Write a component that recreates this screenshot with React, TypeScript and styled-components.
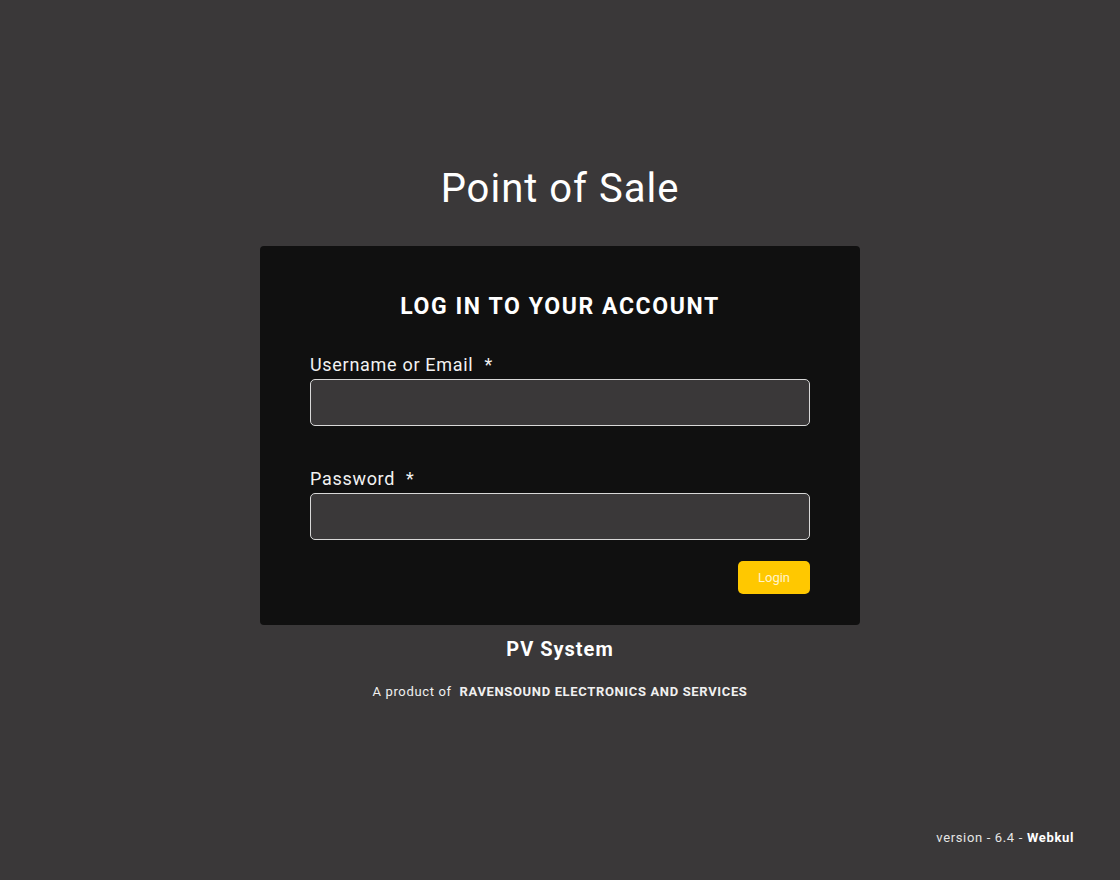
import React from "react";
import styled, { createGlobalStyle } from "styled-components";

const Global = createGlobalStyle`
  html, body { margin: 0; padding: 0; }
  body {
    background: #3a3839;
    font-family: Roboto, "Liberation Sans", sans-serif;
    color: #fff;
  }
  * { box-sizing: border-box; }
`;

const Page = styled.div`
  min-height: 880px;
  display: flex;
  flex-direction: column;
`;

const Main = styled.main`
  display: flex;
  flex-direction: column;
  align-items: center;
  padding-top: 164px;
`;

const Title = styled.h1`
  margin: 0;
  font-size: 40px;
  font-weight: 400;
  line-height: 50px;
  color: #fff;
  letter-spacing: 1px;
`;

const Card = styled.form`
  margin-top: 32px;
  width: 600px;
  background: #101010;
  border-radius: 4px;
  padding: 45px 50px 31px;
  display: flex;
  flex-direction: column;
`;

const CardTitle = styled.h2`
  margin: 0 0 31px;
  text-align: center;
  font-size: 23px;
  font-weight: 700;
  line-height: 32px;
  letter-spacing: 1.6px;
  color: #fff;
`;

const Field = styled.div<{ $gap?: number }>`
  display: flex;
  flex-direction: column;
  margin-bottom: ${(p) => p.$gap ?? 0}px;
`;

const Label = styled.label`
  font-size: 18px;
  line-height: 22px;
  letter-spacing: 0.7px;
  color: #f2f2f2;
  margin-bottom: 3px;
`;

const Star = styled.span`
  margin-left: 11px;
`;

const Input = styled.input`
  height: 47px;
  width: 100%;
  background: #3a3839;
  border: 1px solid #d8d8d8;
  border-radius: 5px;
  color: #fff;
  font-size: 16px;
  padding: 0 12px;
  outline: none;
`;

const Actions = styled.div`
  display: flex;
  justify-content: flex-end;
  margin-top: 21px;
`;

const Button = styled.button`
  width: 72px;
  height: 33px;
  border: none;
  border-radius: 5px;
  background: #ffc800;
  color: #fff4cc;
  font-family: Roboto, "Liberation Sans", sans-serif;
  font-size: 13px;
  cursor: pointer;
`;

const Brand = styled.div`
  margin-top: 12px;
  font-size: 20px;
  font-weight: 700;
  line-height: 24px;
  letter-spacing: 1px;
`;

const Product = styled.div`
  margin-top: 23px;
  font-size: 13px;
  line-height: 16px;
  letter-spacing: 0.65px;
  color: #f0f0f0;
  b {
    font-weight: 700;
    margin-left: 4px;
  }
`;

const Footer = styled.footer`
  margin-top: auto;
  display: flex;
  justify-content: flex-end;
  padding: 0 46px 34px;
  font-size: 13px;
  line-height: 16px;
  letter-spacing: 0.65px;
  color: #e6e6e6;
  b { font-weight: 700; color: #fff; margin-left: 4px; }
`;

export default function App() {
  return (
    <>
      <Global />
      <Page>
        <Main>
          <Title>Point of Sale</Title>
          <Card onSubmit={(e) => e.preventDefault()}>
            <CardTitle>LOG IN TO YOUR ACCOUNT</CardTitle>
            <Field $gap={42}>
              <Label>
                Username or Email<Star>*</Star>
              </Label>
              <Input type="text" />
            </Field>
            <Field>
              <Label>
                Password<Star>*</Star>
              </Label>
              <Input type="password" />
            </Field>
            <Actions>
              <Button type="submit">Login</Button>
            </Actions>
          </Card>
          <Brand>PV System</Brand>
          <Product>
            A product of <b>RAVENSOUND ELECTRONICS AND SERVICES</b>
          </Product>
        </Main>
        <Footer>
          <span>
            version - 6.4 -<b>Webkul</b>
          </span>
        </Footer>
      </Page>
    </>
  );
}
